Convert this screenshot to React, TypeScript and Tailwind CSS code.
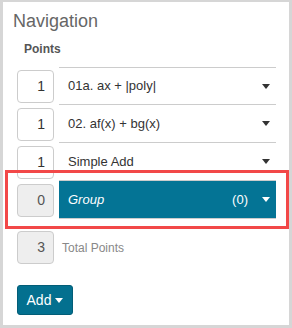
const rows = [
  { pts: 1, name: "01a. ax + |poly|" },
  { pts: 1, name: "02. af(x) + bg(x)" },
  { pts: 1, name: "Simple Add" },
];

const Caret = ({ color = "#333" }: { color?: string }) => (
  <svg width="8" height="5" viewBox="0 0 8 5" className="shrink-0">
    <path d="M0 0h8L4 5z" fill={color} />
  </svg>
);

const App = () => {
  return (
    <div
      className="relative w-[292px] h-[328px] bg-white border-[#d6d6d6] border-l-[3px] border-t-2 border-r-[3px] border-b-[3px] overflow-hidden"
      style={{ fontFamily: '"Liberation Sans", Arial, sans-serif' }}
    >
      <h1 className="pl-[10px] pt-[8px] text-[18px] leading-[22px] text-[#666]">Navigation</h1>
      <div className="pl-[21px] mt-[10px] text-[12px] leading-[14px] font-bold text-[#555]">Points</div>

      <div className="mt-[11px] pl-[14px] pr-[13px]">
        {rows.map((r, i) => (
          <div key={i} className="flex items-center h-[38px] gap-[5px]">
            <div className="w-[37px] h-[33px] border border-[#ccc] rounded-[4px] flex items-center justify-end pr-[8px] text-[14px] text-[#333] bg-white">
              {r.pts}
            </div>
            <div
              className={
                "flex-1 h-[38px] flex items-center justify-between pl-[9px] pr-[6px] border-b border-[#ccc] text-[13px] text-[#333]" +
                (i === 0 ? " border-t" : "")
              }
            >
              <span>{r.name}</span>
              <Caret />
            </div>
          </div>
        ))}
        <div className="flex items-center h-[38px] gap-[5px]">
          <div className="w-[37px] h-[33px] border border-[#ccc] rounded-[4px] flex items-center justify-end pr-[8px] text-[14px] text-[#555] bg-[#eee]">
            0
          </div>
          <div className="flex-1 h-[38px] flex flex-col">
            <div className="flex-1 flex items-center justify-between pl-[9px] pr-[6px] bg-[#047495] text-white text-[13px]">
              <span className="italic">Group</span>
              <span className="flex items-center gap-[14px]">
                <span>(0)</span>
                <Caret color="#fff" />
              </span>
            </div>
            <div className="h-px bg-[#ccc]" />
          </div>
        </div>

        <div className="flex items-center h-[33px] gap-[8px] mt-[12px]">
          <div className="w-[37px] h-[33px] border border-[#ccc] rounded-[4px] flex items-center justify-end pr-[8px] text-[14px] text-[#555] bg-[#eee]">
            3
          </div>
          <span className="text-[12px] text-[#888]">Total Points</span>
        </div>

        <button className="mt-[21px] w-[56px] h-[30px] rounded-[3px] bg-[#03708f] border border-[#025d77] text-white text-[14px] flex items-center justify-center gap-[4px]">
          <span>Add</span>
          <Caret color="#fff" />
        </button>
      </div>

      <div className="absolute left-[2px] top-[168px] w-[284px] h-[59px] border-[3px] border-[#f24848] pointer-events-none" />
    </div>
  );
};

export default App;
